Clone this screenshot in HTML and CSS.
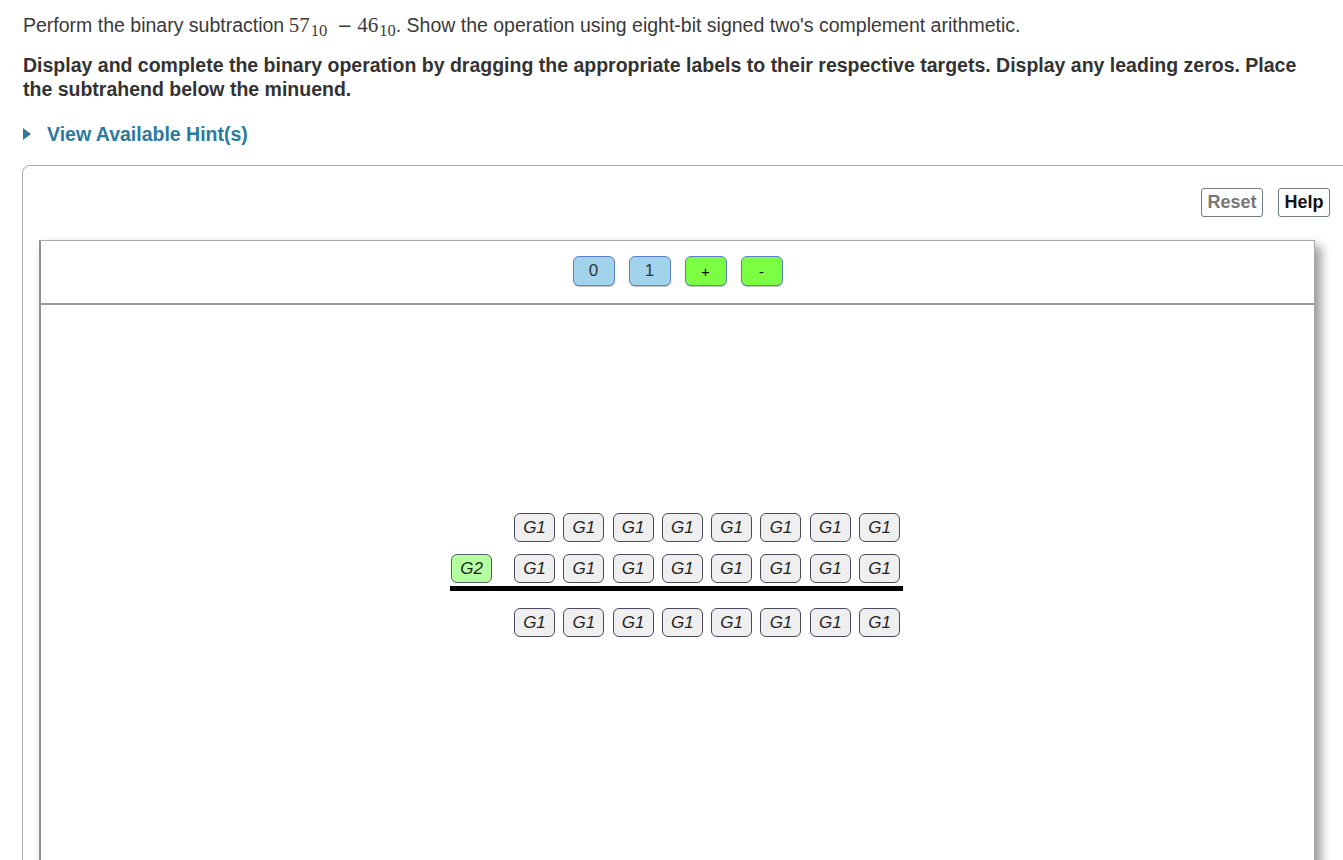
FILE: index.html
```html
<!DOCTYPE html>
<html>
<head>
<meta charset="utf-8">
<link rel="stylesheet" href="styles.css">
</head>
<body>
<div class="page">
  <p class="intro">Perform the binary subtraction <span class="math">57<sub>10</sub><span class="minus">&minus;</span>46<sub>10</sub></span>. Show the operation using eight-bit signed two's complement arithmetic.</p>
  <p class="task">Display and complete the binary operation by dragging the appropriate labels to their respective targets. Display any leading zeros. Place the subtrahend below the minuend.</p>
  <div class="hint"><span class="arrow"></span><span class="hint-text">View Available Hint(s)</span></div>
  <div class="panel">
    <div class="actions">
      <button class="btn btn-reset">Reset</button>
      <button class="btn btn-help">Help</button>
    </div>
    <div class="board">
      <div class="toolbar">
        <span class="token blue">0</span>
        <span class="token blue">1</span>
        <span class="token green">+</span>
        <span class="token green">-</span>
      </div>
      <div class="work">
        <div class="equation">
          <div class="row">
            <span class="op-slot"></span>
            <span class="tile">G1</span><span class="tile">G1</span><span class="tile">G1</span><span class="tile">G1</span><span class="tile">G1</span><span class="tile">G1</span><span class="tile">G1</span><span class="tile">G1</span>
          </div>
          <div class="row">
            <span class="op-slot"><span class="tile g2">G2</span></span>
            <span class="tile">G1</span><span class="tile">G1</span><span class="tile">G1</span><span class="tile">G1</span><span class="tile">G1</span><span class="tile">G1</span><span class="tile">G1</span><span class="tile">G1</span>
          </div>
          <div class="rule"></div>
          <div class="row row-result">
            <span class="op-slot"></span>
            <span class="tile">G1</span><span class="tile">G1</span><span class="tile">G1</span><span class="tile">G1</span><span class="tile">G1</span><span class="tile">G1</span><span class="tile">G1</span><span class="tile">G1</span>
          </div>
        </div>
      </div>
    </div>
  </div>
</div>
</body>
</html>
```

FILE: styles.css
```css
html, body {
  margin: 0;
  padding: 0;
  background: #fff;
  overflow: hidden;
}
body {
  width: 1343px;
  height: 860px;
  font-family: "Liberation Sans", Arial, sans-serif;
  color: #333;
}
.page {
  padding: 13px 0 0 23px;
}
.intro {
  margin: 0;
  height: 24px;
  font-size: 19.5px;
  line-height: 24px;
  color: #3a3a3a;
  white-space: nowrap;
}
.math {
  font-family: "Liberation Serif", "DejaVu Serif", serif;
  font-size: 21px;
  margin-left: -1px;
}
.math sub {
  font-size: 16.5px;
  vertical-align: -4px;
  line-height: 0;
  margin-left: 1px;
}
.minus {
  font-family: "DejaVu Sans", sans-serif;
  font-size: 18px;
  margin: 0 5px 0 10px;
}
.task {
  margin: 16px 0 0;
  font-size: 19.5px;
  line-height: 24px;
  font-weight: bold;
  color: #333;
  padding-right: 20px;
}
.hint {
  margin-top: 21px;
  display: flex;
  align-items: center;
  height: 24px;
  color: #2b7a9e;
  font-size: 19.5px;
  font-weight: bold;
}
.arrow {
  width: 0;
  height: 0;
  border-top: 6px solid transparent;
  border-bottom: 6px solid transparent;
  border-left: 8px solid #2b7a9e;
  margin-right: 16px;
}
.panel {
  margin: 19px 0 0 -1px;
  width: 1340px;
  height: 760px;
  border: 1px solid #aaa;
  border-radius: 8px 0 0 0;
  box-sizing: border-box;
  padding: 22px 0 0 16px;
}
.actions {
  display: flex;
  justify-content: flex-end;
  gap: 15px;
  width: 1291px;
  box-sizing: border-box;
}
.btn {
  height: 29px;
  box-sizing: border-box;
  border: 1px solid #6e7c85;
  border-radius: 3px;
  background: #fff;
  font-family: "Liberation Sans", Arial, sans-serif;
  font-size: 18px;
  font-weight: bold;
  padding: 0;
}
.btn-reset {
  width: 62px;
  color: #777;
}
.btn-help {
  width: 52px;
  color: #111;
}
.board {
  margin-top: 23px;
  width: 1276px;
  height: 700px;
  box-sizing: border-box;
  border-top: 1px solid #aaa;
  border-left: 2px solid #8f8f8f;
  border-right: 1px solid #aaa;
  box-shadow: 6px 6px 10px #999;
}
.toolbar {
  border-bottom: 2px solid #999;
  display: flex;
  justify-content: center;
  align-items: flex-start;
  gap: 14px;
  padding-top: 15px;
  box-sizing: border-box;
  height: 64px;
}
.token {
  width: 42px;
  height: 30px;
  box-sizing: border-box;
  border: 1px solid #5b7fc9;
  border-radius: 6px;
  display: flex;
  align-items: center;
  justify-content: center;
  font-size: 17px;
  color: #333;
  box-shadow: 0 1px 1px rgba(0,0,0,0.25);
}
.token.blue {
  background: #a1d4ec;
}
.token.green {
  background: #7cff43;
  font-size: 15px;
  color: #111;
}
.work {
  padding: 208px 0 0 409px;
}
.row {
  display: flex;
  align-items: center;
  gap: 8.3px;
  height: 29px;
}
.row + .row {
  margin-top: 12px;
}
.op-slot {
  width: 55.7px;
  height: 29px;
  display: flex;
  padding-left: 1px;
  box-sizing: border-box;
}
.tile {
  width: 41px;
  height: 29px;
  box-sizing: border-box;
  border: 1.5px solid #4a4a5c;
  border-radius: 6px;
  background: #efefef;
  display: flex;
  align-items: center;
  justify-content: center;
  font-style: italic;
  font-size: 17px;
  color: #222;
}
.tile.g2 {
  background: #b4ffa0;
  border-color: #55606a;
}
.rule {
  margin-top: 3px;
  width: 453px;
  height: 5px;
  background: #000;
}
.row.row-result {
  margin-top: 17px;
}
```
